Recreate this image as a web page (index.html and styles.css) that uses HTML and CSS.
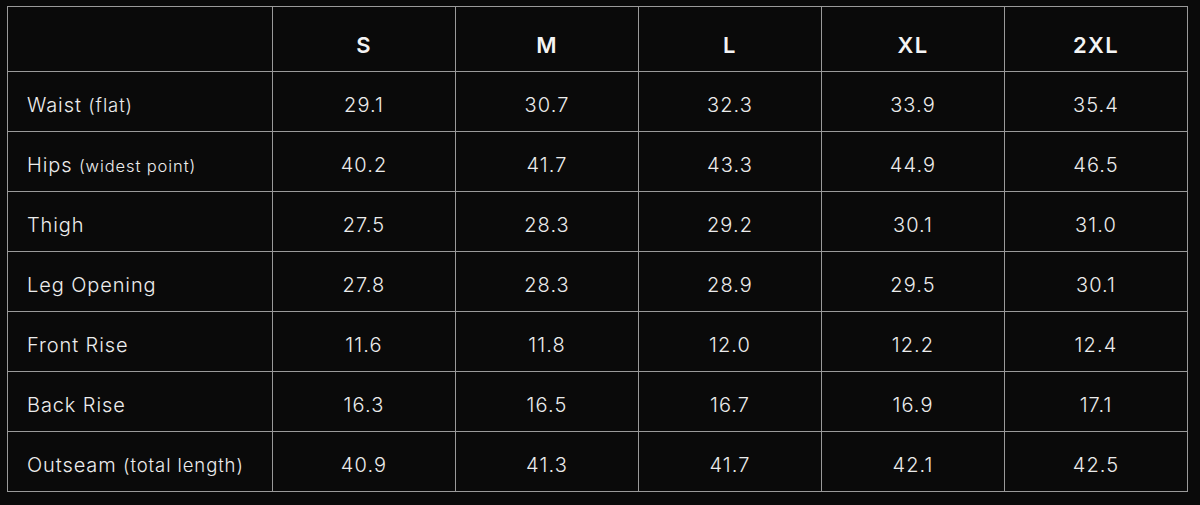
FILE: index.html
```html
<!DOCTYPE html>
<html lang="en">
<head>
<meta charset="utf-8">
<title>Size chart</title>
<link rel="stylesheet" href="styles.css">
</head>
<body>
<div class="wrap">
<table class="chart">
  <colgroup>
    <col class="c-label"><col class="c-size"><col class="c-size"><col class="c-size"><col class="c-size"><col class="c-size">
  </colgroup>
  <thead>
    <tr><th></th><th>S</th><th>M</th><th>L</th><th>XL</th><th>2XL</th></tr>
  </thead>
  <tbody>
    <tr><td class="label">Waist <span class="note">(flat)</span></td><td>29.1</td><td>30.7</td><td>32.3</td><td>33.9</td><td>35.4</td></tr>
    <tr><td class="label">Hips <span class="note small">(widest point)</span></td><td>40.2</td><td>41.7</td><td>43.3</td><td>44.9</td><td>46.5</td></tr>
    <tr><td class="label">Thigh</td><td>27.5</td><td>28.3</td><td>29.2</td><td>30.1</td><td>31.0</td></tr>
    <tr><td class="label">Leg Opening</td><td>27.8</td><td>28.3</td><td>28.9</td><td>29.5</td><td>30.1</td></tr>
    <tr><td class="label">Front Rise</td><td>11.6</td><td>11.8</td><td>12.0</td><td>12.2</td><td>12.4</td></tr>
    <tr><td class="label">Back Rise</td><td>16.3</td><td>16.5</td><td>16.7</td><td>16.9</td><td>17.1</td></tr>
    <tr><td class="label">Outseam <span class="note">(total length)</span></td><td>40.9</td><td>41.3</td><td>41.7</td><td>42.1</td><td>42.5</td></tr>
  </tbody>
</table>
</div>
</body>
</html>
```
FILE: styles.css
```css
html, body {
  margin: 0;
  background: #0a0a0a;
}
body {
  font-family: Inter, "Noto Sans", sans-serif;
  color: #ececec;
}
.wrap {
  padding: 6px 13px 0 7px;
}
.chart {
  border-collapse: collapse;
  table-layout: fixed;
  width: 1180px;
}
.c-label { width: 265px; }
.c-size { width: 183px; }
.chart th,
.chart td {
  border: 1px solid #9a9a9a;
  padding: 7px 0 0;
  text-align: center;
  font-size: 20px;
  font-weight: 300;
  letter-spacing: 1.1px;
}
.chart th {
  font-weight: 600;
  font-size: 22px;
  letter-spacing: 1.4px;
  color: #f4f4f4;
  padding-top: 12px;
  height: 52px;
}
.chart td {
  height: 52px;
}
.chart td.label {
  text-align: left;
  padding-left: 19px;
  color: #ededed;
  letter-spacing: 0.9px;
}
.note {
  font-size: 18.5px;
  letter-spacing: 0.9px;
}
.note.small {
  font-size: 16.5px;
}
```
